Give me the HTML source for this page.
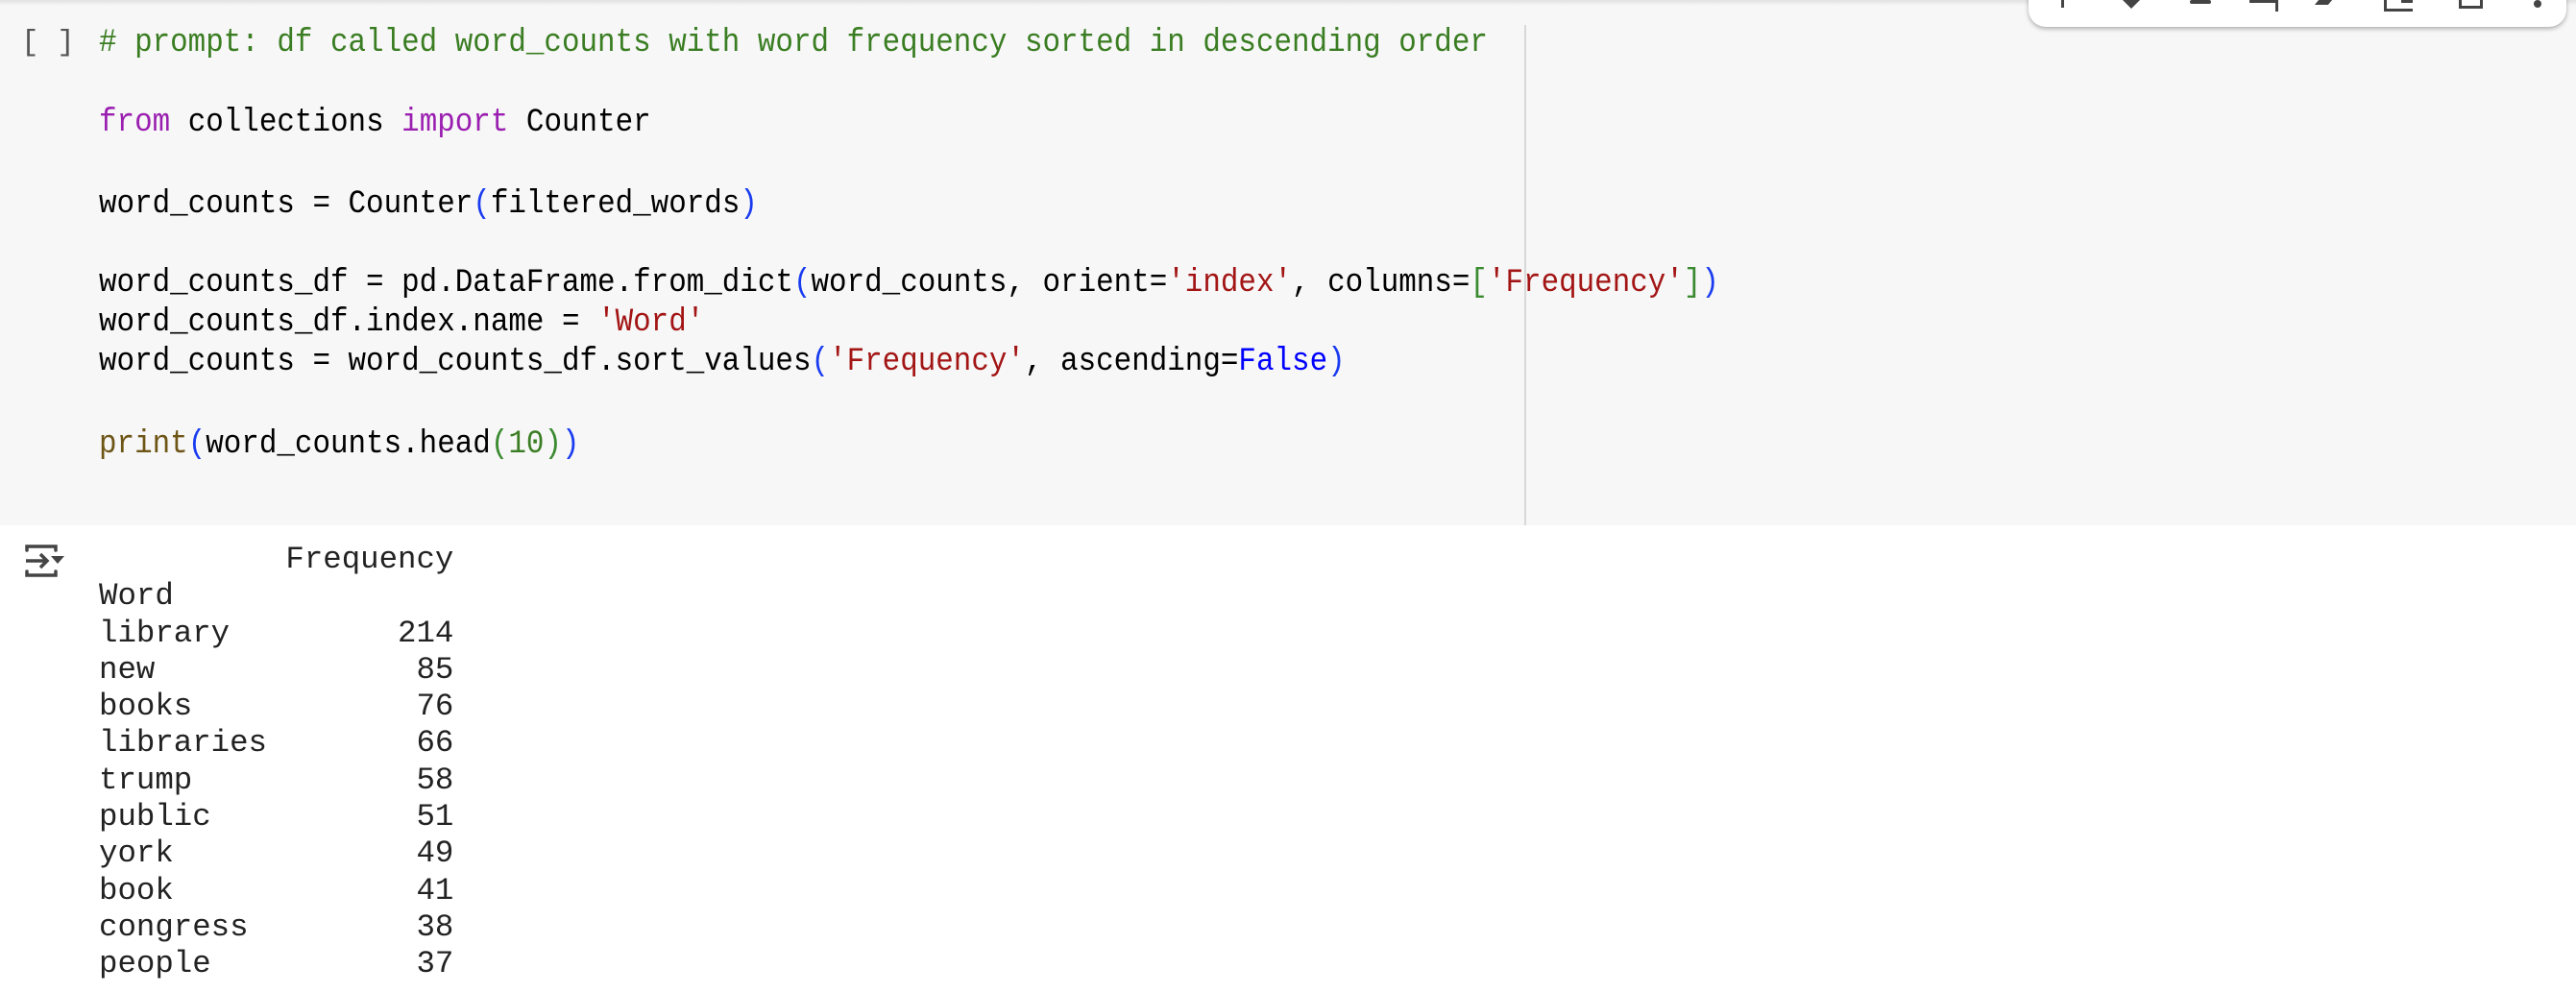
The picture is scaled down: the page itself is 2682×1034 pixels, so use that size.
<!DOCTYPE html>
<html><head><meta charset="utf-8"><style>
body{margin:0;width:2682px;height:1034px;background:#fff;position:relative;overflow:hidden;font-family:"Liberation Mono",monospace;}
.cell{position:absolute;left:0;top:0;width:2682px;height:547px;background:#f7f7f7;}
.topsh{position:absolute;left:0;top:0;width:2682px;height:6px;background:linear-gradient(#e2e2e2,#f7f7f7);}
.vl{position:absolute;left:1587px;top:26px;width:2px;height:521px;background:#d8d8d8;}
.l{position:absolute;left:103px;font-size:30.9px;line-height:41px;white-space:pre;color:#000;transform:scaleY(1.12);transform-origin:left center;}
.c{color:#3a7d22}.k{color:#9a1fb0}.s{color:#a31515}.p{color:#1a3cf0}.b{color:#0000ff}.f{color:#6d5516}.n{color:#3a7d22}.g{color:#3a8a30}
.br{position:absolute;left:22px;top:24px;font-size:31px;line-height:41px;color:#555;}
.o{position:absolute;left:103px;font-size:32.4px;line-height:38.3px;white-space:pre;color:#222;}
.tb{position:absolute;left:2112px;top:-20px;width:560px;height:48px;background:#fff;border-radius:0 0 18px 18px;box-shadow:0 2px 5px rgba(0,0,0,.3);}
.ic{position:absolute;background:#444;}
</style></head><body>
<div class="cell"></div><div class="topsh"></div><div class="vl"></div>
<div class="tb">
<div class="ic" style="left:34px;top:20px;width:3px;height:8px"></div>
<div style="position:absolute;left:98px;top:20px;width:0;height:0;border-left:9px solid transparent;border-right:9px solid transparent;border-top:9px solid #444"></div>
<div class="ic" style="left:168px;top:20px;width:22px;height:4px;border-radius:2px"></div>
<div class="ic" style="left:230px;top:20px;width:30px;height:3px"></div>
<div class="ic" style="left:257px;top:20px;width:3px;height:12px"></div>
<div class="ic" style="left:300px;top:20px;width:14px;height:5px;transform:skewX(-40deg)"></div>
<div class="ic" style="left:370px;top:20px;width:3px;height:12px"></div>
<div class="ic" style="left:370px;top:29px;width:30px;height:3px"></div>
<div class="ic" style="left:388px;top:20px;width:12px;height:3px"></div>
<div class="ic" style="left:448px;top:20px;width:3px;height:9px"></div>
<div class="ic" style="left:448px;top:26px;width:25px;height:3px"></div>
<div class="ic" style="left:470px;top:20px;width:3px;height:9px"></div>
<div class="ic" style="left:526px;top:20px;width:8px;height:8px;border-radius:50%"></div>
</div>
<div class="br">[ ]</div>
<div class="l c" style="top:24px"># prompt: df called word_counts with word frequency sorted in descending order</div>
<div class="l" style="top:107px"><span class="k">from</span> collections <span class="k">import</span> Counter</div>
<div class="l" style="top:192px">word_counts = Counter<span class="p">(</span>filtered_words<span class="p">)</span></div>
<div class="l" style="top:274px">word_counts_df = pd.DataFrame.from_dict<span class="p">(</span>word_counts, orient=<span class="s">'index'</span>, columns=<span class="g">[</span><span class="s">'Frequency'</span><span class="g">]</span><span class="p">)</span></div>
<div class="l" style="top:315px">word_counts_df.index.name = <span class="s">'Word'</span></div>
<div class="l" style="top:356px">word_counts = word_counts_df.sort_values<span class="p">(</span><span class="s">'Frequency'</span>, ascending=<span class="b">False</span><span class="p">)</span></div>
<div class="l" style="top:442px"><span class="f">print</span><span class="p">(</span>word_counts.head<span class="g">(</span><span class="n">10</span><span class="g">)</span><span class="p">)</span></div>
<svg style="position:absolute;left:25px;top:564px" width="44" height="40" viewBox="0 0 44 40">
<path d="M3 9V5h30v4M3 31v4h30v-4" fill="none" stroke="#444" stroke-width="3.5" stroke-linecap="round"/>
<path d="M2 20h22M17 13l7 7-7 7" fill="none" stroke="#444" stroke-width="3.5"/>
<path d="M28 15h14l-7 8z" fill="#444"/>
</svg>
<div class="o" style="top:564px">          Frequency
Word
library         214
new              85
books            76
libraries        66
trump            58
public           51
york             49
book             41
congress         38
people           37</div>
</body></html>
